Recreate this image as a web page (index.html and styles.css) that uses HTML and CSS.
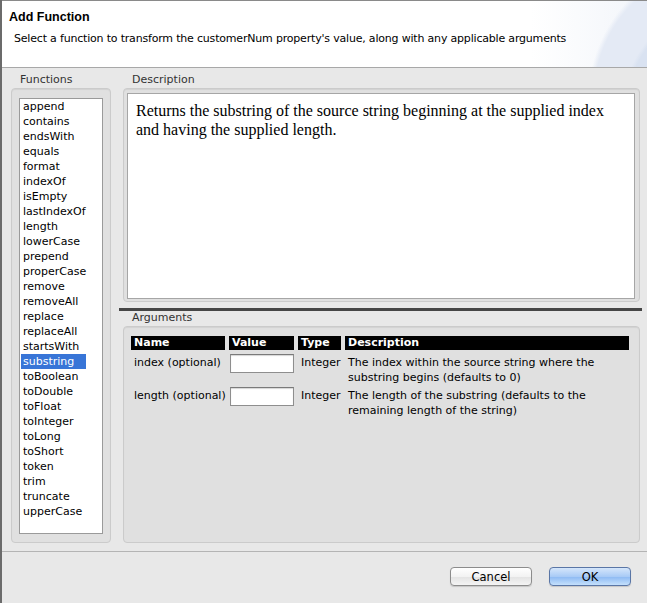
FILE: index.html
```html
<!DOCTYPE html>
<html>
<head>
<meta charset="utf-8">
<link rel="stylesheet" href="styles.css">
</head>
<body>
<div class="dialog">
  <header class="banner">
    <h1 class="title">Add Function</h1>
    <p class="subtitle">Select a function to transform the customerNum property's value, along with any applicable arguments</p>
  </header>
  <main class="content">
    <section class="col-left">
      <div class="label">Functions</div>
      <div class="group group-fn">
        <ul class="fn-list">
          <li>append</li><li>contains</li><li>endsWith</li><li>equals</li><li>format</li><li>indexOf</li><li>isEmpty</li><li>lastIndexOf</li><li>length</li><li>lowerCase</li><li>prepend</li><li>properCase</li><li>remove</li><li>removeAll</li><li>replace</li><li>replaceAll</li><li>startsWith</li><li class="sel">substring</li><li>toBoolean</li><li>toDouble</li><li>toFloat</li><li>toInteger</li><li>toLong</li><li>toShort</li><li>token</li><li>trim</li><li>truncate</li><li>upperCase</li>
        </ul>
      </div>
    </section>
    <section class="col-right">
      <div class="label">Description</div>
      <div class="group group-desc">
        <div class="desc-box">Returns the substring of the source string beginning at the supplied index and having the supplied length.</div>
      </div>
      <div class="sash"></div>
      <div class="label">Arguments</div>
      <div class="group group-args">
        <div class="args">
          <div class="th">Name</div><div class="th">Value</div><div class="th">Type</div><div class="th">Description</div>
          <div class="td">index (optional)</div><div class="td"><div class="input"></div></div><div class="td">Integer</div><div class="td">The index within the source string where the substring begins (defaults to 0)</div>
          <div class="td">length (optional)</div><div class="td"><div class="input"></div></div><div class="td">Integer</div><div class="td">The length of the substring (defaults to the remaining length of the string)</div>
        </div>
      </div>
    </section>
  </main>
  <footer class="footer">
    <button class="btn">Cancel</button>
    <button class="btn btn-ok">OK</button>
  </footer>
</div>
</body>
</html>
```
FILE: styles.css
```css
* { box-sizing: border-box; }
html, body { margin: 0; padding: 0; background: #e8e8e8; }
body { font-family: "DejaVu Sans", "Liberation Sans", sans-serif; font-size: 11px; color: #000; }

.dialog {
  width: 647px;
  height: 603px;
  display: flex;
  flex-direction: column;
  background: #e8e8e8;
  border-left: 2px solid #6b6b6b;
}

.banner {
  height: 68px;
  border-top: 1px solid #8a8a8a;
  border-bottom: 1px solid #a8a8a8;
  background:
    radial-gradient(ellipse 110px 110px at 730px 110px, #d9e2f1 0%, #d9e2f1 96%, rgba(217,226,241,0) 100%),
    radial-gradient(ellipse 132px 140px at 718px 100px, #e4eaf5 0%, #e4eaf5 96%, rgba(228,234,245,0) 100%),
    linear-gradient(90deg, #ffffff 82%, #f2f5fa 100%);
  padding: 8px 0 0 7px;
}
.title {
  margin: 0;
  font-family: "Liberation Sans", Arial, sans-serif;
  font-weight: bold;
  font-size: 12.5px;
  line-height: 16px;
}
.subtitle {
  margin: 7px 0 0 5px;
  font-size: 11px;
  line-height: 14px;
  letter-spacing: -0.19px;
}

.content {
  flex: 1;
  display: grid;
  grid-template-columns: 100px 517px;
  column-gap: 12px;
  padding: 5px 0 0 9px;
  border-bottom: 1px solid #b4b4b4;
}

.col-left, .col-right { display: flex; flex-direction: column; }

.label {
  height: 15px;
  line-height: 14px;
  padding-left: 9px;
  color: #333;
  font-size: 11px;
}

.group {
  background: #e0e0e0;
  border: 1px solid #cbcbcb;
  border-radius: 4px;
  box-shadow: inset 0 1px 1px #d2d2d2;
}

.group-fn {
  height: 455px;
  padding: 9px 7px 8px 7px;
}
.fn-list {
  list-style: none;
  margin: 0;
  padding: 0 0 0 1px;
  height: 100%;
  background: #fff;
  border: 1px solid #9a9a9a;
}
.fn-list li {
  height: 15px;
  line-height: 15px;
  padding-left: 2px;
  width: 65px;
  white-space: nowrap;
}
.fn-list li.sel {
  background: #3875d7;
  color: #fff;
}

.group-desc {
  height: 214px;
  padding: 4px 4px 2px 3px;
}
.desc-box {
  height: 100%;
  background: #fff;
  border: 1px solid #a6a6a6;
  padding: 7px 8px;
  font-family: "Liberation Serif", "Times New Roman", serif;
  font-size: 16px;
  line-height: 19px;
}

.sash {
  height: 3px;
  background: #464646;
  margin: 6px -2px 0 -4px;
}

.group-args {
  height: 217px;
  padding: 9px 10px 0 7px;
}

.args {
  display: grid;
  grid-template-columns: 94px 65px 43px 284px;
  column-gap: 4px;
  grid-auto-rows: auto;
}
.th {
  background: #000;
  color: #fff;
  font-weight: bold;
  height: 14px;
  line-height: 14px;
  padding-left: 3px;
  margin-bottom: 5px;
}
.td {
  line-height: 15px;
  padding: 0 0 3px 3px;
  min-height: 33px;
  white-space: nowrap;
}
.td:nth-child(4n) { white-space: normal; padding-right: 4px; }
.td:nth-child(4n+2) { padding-left: 1px; }
.input {
  width: 64px;
  height: 19px;
  margin-top: -1px;
  background: #fff;
  border: 1px solid #8e8e8e;
  border-top-color: #7a7a7a;
  box-shadow: inset 0 1px 1px #d5d5d5;
}

.footer {
  height: 51px;
  display: flex;
  justify-content: flex-end;
  align-items: flex-start;
  gap: 17px;
  padding: 15px 16px 0 0;
}
.btn {
  width: 82px;
  height: 19px;
  border: 1px solid #8c8c8c;
  border-radius: 4px;
  background: linear-gradient(#ffffff 0%, #f3f3f3 50%, #e3e3e3 51%, #f4f4f4 100%);
  font-family: "DejaVu Sans", sans-serif;
  font-size: 11.5px;
  line-height: 16px;
  padding: 0;
  color: #000;
  box-shadow: 0 1px 1px rgba(0,0,0,0.15);
}
.btn-ok {
  border-color: #5a76a6;
  background: linear-gradient(#d5e6fb 0%, #a9cbf6 50%, #8cb9f3 51%, #c4e0fc 100%);
}
```
